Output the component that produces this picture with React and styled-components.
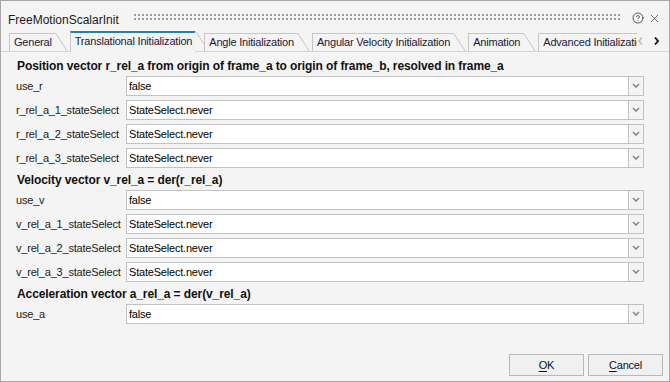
import React from "react";
import styled, { createGlobalStyle } from "styled-components";
import { CircleHelp, X } from "lucide-react";

const GlobalStyle = createGlobalStyle`
  html, body {
    margin: 0;
    padding: 0;
  }
  body {
    font-family: "Liberation Sans", Arial, sans-serif;
    background: #ffffff;
  }
`;

const sections = [
  {
    title:
      "Position vector r_rel_a from origin of frame_a to origin of frame_b, resolved in frame_a",
    rows: [
      ["use_r", "false"],
      ["r_rel_a_1_stateSelect", "StateSelect.never"],
      ["r_rel_a_2_stateSelect", "StateSelect.never"],
      ["r_rel_a_3_stateSelect", "StateSelect.never"],
    ],
  },
  {
    title: "Velocity vector v_rel_a = der(r_rel_a)",
    rows: [
      ["use_v", "false"],
      ["v_rel_a_1_stateSelect", "StateSelect.never"],
      ["v_rel_a_2_stateSelect", "StateSelect.never"],
      ["v_rel_a_3_stateSelect", "StateSelect.never"],
    ],
  },
  {
    title: "Acceleration vector a_rel_a = der(v_rel_a)",
    rows: [["use_a", "false"]],
  },
];

const tabs = [
  "General",
  "Translational Initialization",
  "Angle Initialization",
  "Angular Velocity Initialization",
  "Animation",
  "Advanced Initialization",
];

const App = () => {
  return (
    <>
      <GlobalStyle />
      <Window>
        <TitleBar>
          <Title>FreeMotionScalarInit</Title>
          <Grip />
          <TitleIcon>
            <CircleHelp size={12} strokeWidth={1.6} />
          </TitleIcon>
          <TitleIcon>
            <X size={13} strokeWidth={1.3} />
          </TitleIcon>
        </TitleBar>

        <TabStrip>
          <TabList>
            {tabs.map((t) => (
              <Tab key={t} $active={t === "Translational Initialization"}>
                {t}
              </Tab>
            ))}
          </TabList>
          <ScrollArrows>
            <svg width="5" height="8" viewBox="0 0 5 8">
              <polyline
                points="4,0.5 1,4 4,7.5"
                fill="none"
                stroke="#bdbdbd"
                strokeWidth="1.6"
              />
            </svg>
            <svg width="5" height="8" viewBox="0 0 5 8">
              <polyline
                points="1,0.5 4,4 1,7.5"
                fill="none"
                stroke="#111"
                strokeWidth="1.8"
              />
            </svg>
          </ScrollArrows>
        </TabStrip>

        <Content>
          {sections.map((s) => (
            <Section key={s.title}>
              <SectionTitle>{s.title}</SectionTitle>
              {s.rows.map(([label, value]) => (
                <Row key={label}>
                  <Label>{label}</Label>
                  <Field>{value}</Field>
                  <DropButton>
                    <svg width="8" height="6" viewBox="0 0 8 6">
                      <polyline
                        points="1,1 4,4 7,1"
                        fill="none"
                        stroke="#8a8a8a"
                        strokeWidth="1.7"
                      />
                    </svg>
                  </DropButton>
                </Row>
              ))}
            </Section>
          ))}
        </Content>

        <Footer>
          <Button>
            <u>O</u>K
          </Button>
          <Button>
            <u>C</u>ancel
          </Button>
        </Footer>
      </Window>
    </>
  );
};

export default App;

const Window = styled.div`
  box-sizing: border-box;
  width: 670px;
  height: 382px;
  border: 1px solid #a8a8a8;
  background: #f4f4f4;
  display: flex;
  flex-direction: column;
  overflow: hidden;
  color: #1a1a1a;
`;

const TitleBar = styled.div`
  height: 30px;
  flex: none;
  display: flex;
  align-items: flex-start;
  padding: 0 8px 0 7px;
`;

const Title = styled.div`
  margin-top: 12px;
  font-size: 12px;
  line-height: 14px;
  color: #1a1a1a;
  white-space: nowrap;
`;

const Grip = styled.div`
  flex: 1;
  height: 8px;
  margin: 13px 8px 0 15px;
  background-image: radial-gradient(
    circle at 1px 1px,
    #9c9c9c 0.9px,
    transparent 1.1px
  );
  background-size: 4px 4px;
`;

const TitleIcon = styled.div`
  margin-top: 11px;
  margin-left: 4px;
  display: flex;
  color: #333;
`;

const TabStrip = styled.div`
  flex: none;
  height: 20px;
  display: flex;
  align-items: flex-end;
  padding-left: 8px;
  border-bottom: 1px solid #d4d4d4;
`;

const TabList = styled.div`
  flex: 1;
  display: flex;
  align-items: flex-end;
  overflow: hidden;
  height: 21px;
  margin-bottom: -1px;
`;

const Tab = styled.div`
  position: relative;
  flex: none;
  box-sizing: border-box;
  height: ${(p) => (p.$active ? "21px" : "19px")};
  padding: 0 3px 0 4px;
  margin-right: ${(p) => (p.$active ? "9px" : "15px")};
  border-left: 1px solid #c6c6c6;
  border-top: ${(p) => (p.$active ? "2px solid #2a7fb2" : "1px solid #c6c6c6")};
  border-bottom: 1px solid ${(p) => (p.$active ? "#f4f4f4" : "#d4d4d4")};
  background: #f4f4f4;
  font-size: 11px;
  letter-spacing: -0.2px;
  line-height: 17px;
  color: #20203a;
  white-space: nowrap;

  &::after {
    content: "";
    position: absolute;
    left: 100%;
    top: ${(p) => (p.$active ? "-2px" : "-1px")};
    height: ${(p) => (p.$active ? "20px" : "18px")};
    width: 0;
    border-right: 1px solid #c6c6c6;
    transform: skewX(33deg);
    transform-origin: top left;
  }
`;

const ScrollArrows = styled.div`
  flex: none;
  width: 32px;
  height: 20px;
  display: flex;
  align-items: center;
  gap: 11px;
  padding-left: 1px;
  box-sizing: border-box;
`;

const Content = styled.div`
  padding: 6px 0 0 15px;
  display: flex;
  flex-direction: column;
  gap: 2px;
`;

const Section = styled.div`
  display: flex;
  flex-direction: column;
`;

const SectionTitle = styled.div`
  height: 16px;
  line-height: 16px;
  font-size: 12px;
  font-weight: bold;
  letter-spacing: -0.1px;
  color: #111;
  padding-left: 1px;
  white-space: nowrap;
`;

const Row = styled.div`
  height: 24px;
  display: flex;
  align-items: center;
`;

const Label = styled.div`
  width: 110px;
  flex: none;
  font-size: 11px;
  letter-spacing: -0.2px;
  color: #1a1a1a;
  white-space: nowrap;
`;

const Field = styled.div`
  box-sizing: border-box;
  width: 503px;
  height: 20px;
  border: 1px solid #c2c2c2;
  background: #ffffff;
  padding-left: 2px;
  font-size: 11px;
  letter-spacing: -0.2px;
  line-height: 18px;
  color: #000;
`;

const DropButton = styled.div`
  box-sizing: border-box;
  width: 15px;
  height: 20px;
  border: 1px solid #c2c2c2;
  border-left: none;
  background: #f4f4f4;
  display: flex;
  align-items: center;
  justify-content: center;
`;

const Footer = styled.div`
  margin-top: auto;
  display: flex;
  justify-content: flex-end;
  gap: 4px;
  padding: 0 6px 5px 0;
`;

const Button = styled.div`
  box-sizing: border-box;
  width: 75px;
  height: 22px;
  border: 1px solid #b9b9b9;
  background: #f0f0f0;
  font-size: 11px;
  letter-spacing: -0.2px;
  line-height: 20px;
  text-align: center;
  color: #111;

  u {
    text-decoration-thickness: 1px;
    text-underline-offset: 2px;
  }
`;
